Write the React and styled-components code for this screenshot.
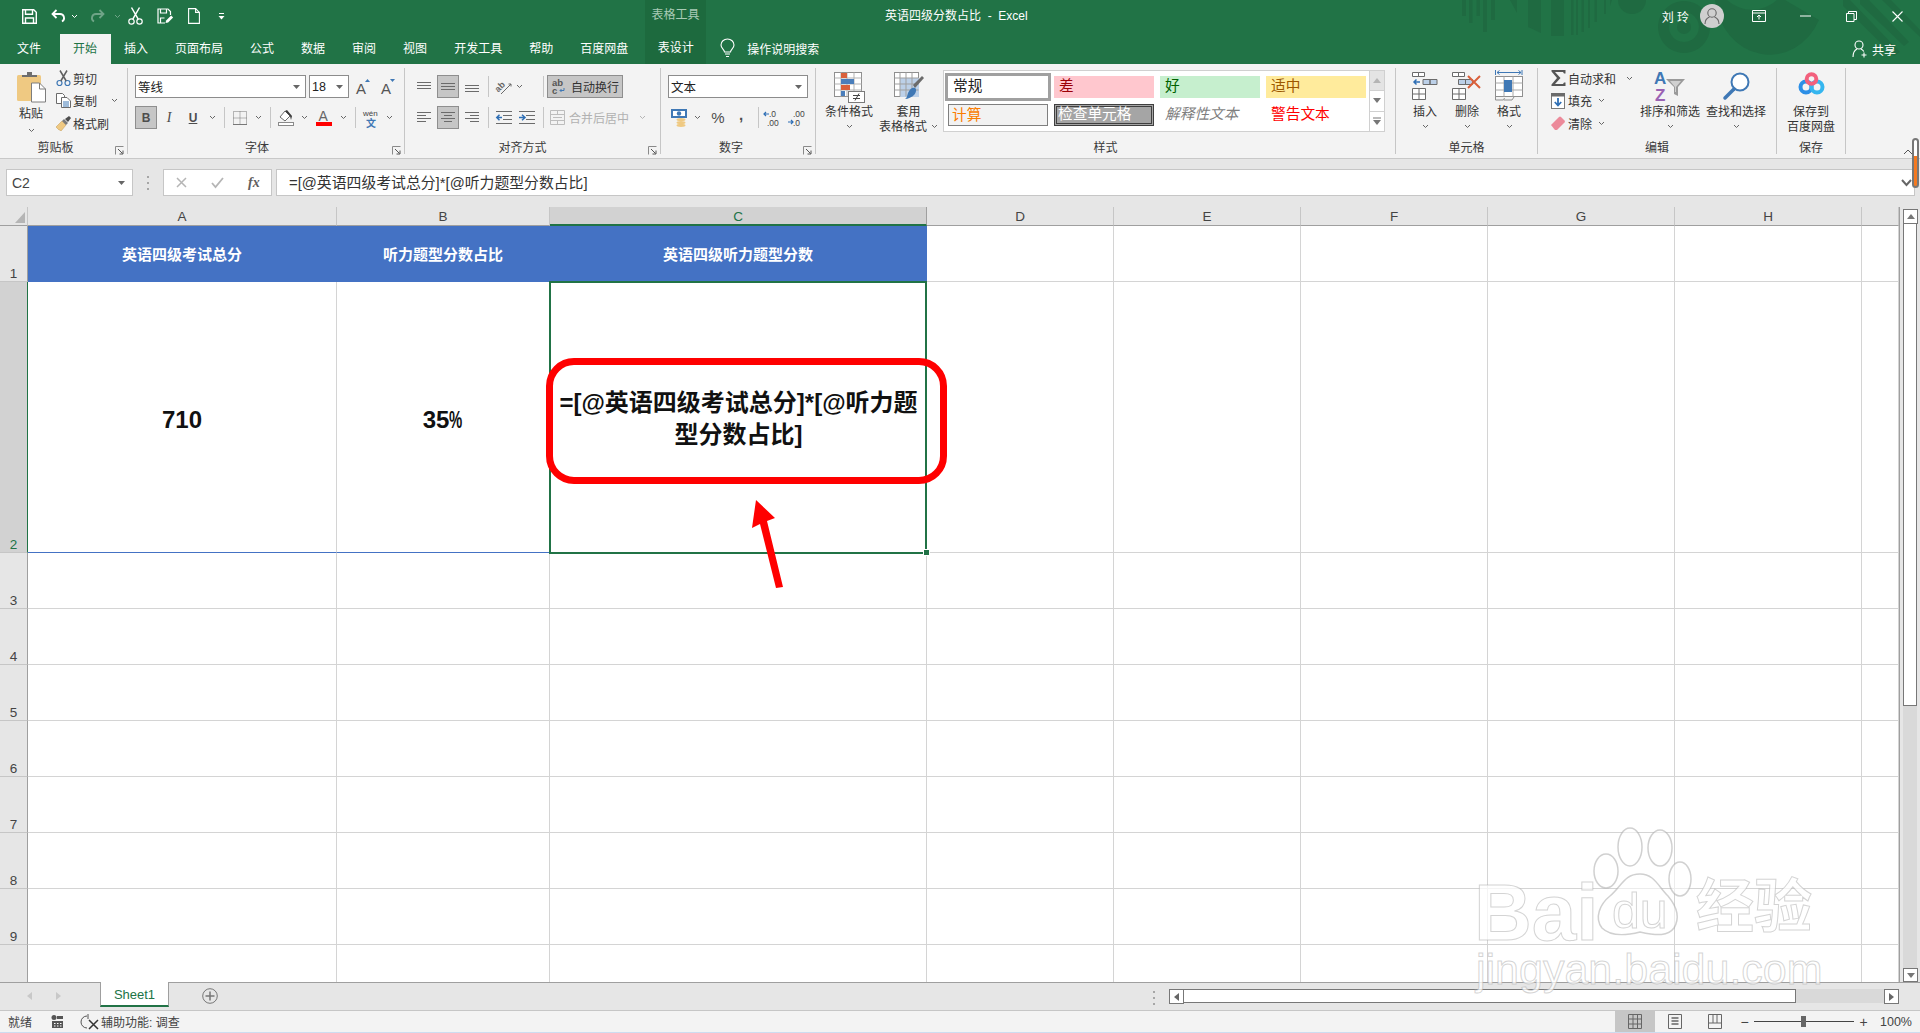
import React from "react";
import styled, { createGlobalStyle } from "styled-components";

const GlobalStyle = createGlobalStyle`
  html, body {
    margin: 0;
    padding: 0;
    overflow: hidden;
    background: #ffffff;
    font-family: "Liberation Sans", "Noto Sans CJK SC", sans-serif;
  }
  svg {
    overflow: visible;
  }
`;

const Page = styled.div`
  position: relative;
  width: 1920px;
  height: 1033px;
  overflow: hidden;
  display: flex;
  flex-direction: column;
  font-size: 12px;
  color: #333333;
`;

/* ---------- title bar ---------- */

const TitleBar = styled.div`
  position: relative;
  height: 64px;
  flex: none;
  background: #217346;
  color: #ffffff;
`;

const Decoration = styled.svg`
  position: absolute;
  left: 1440px;
  top: 0;
`;

const TopRow = styled.div`
  position: relative;
  display: flex;
  align-items: center;
  height: 32px;
`;

const Qat = styled.div`
  display: flex;
  align-items: center;
  width: 645px;
  padding-left: 22px;
  box-sizing: border-box;
`;

const QatItem = styled.span`
  display: inline-flex;
  margin-left: ${(p) => p.$ml || 0}px;
  opacity: ${(p) => (p.$dim ? 0.35 : 1)};
`;

const ContextLabel = styled.div`
  width: 61px;
  height: 32px;
  line-height: 30px;
  text-align: center;
  background: #1d6a3e;
  color: #a9cbb6;
`;

const DocTitle = styled.div`
  margin-left: 179px;
  font-size: 12px;
  white-space: pre;
  margin-top: -4px;
`;

const Account = styled.div`
  margin-left: auto;
  display: flex;
  align-items: center;
`;

const UserName = styled.span`
  font-size: 12px;
  margin-right: 11px;
`;

const Avatar = styled.span`
  display: inline-flex;
  align-items: center;
  justify-content: center;
  width: 24px;
  height: 24px;
  border-radius: 50%;
  background: #cfcfcf;
  margin-right: 12px;
`;

const WinButton = styled.span`
  display: inline-flex;
  align-items: center;
  justify-content: center;
  width: 46px;
  height: 30px;
`;

const TabRow = styled.div`
  position: relative;
  display: flex;
  align-items: flex-end;
  height: 32px;
  padding-left: 3.5px;
`;

const Tab = styled.div`
  height: 30px;
  line-height: 30px;
  padding: 0 13.5px;
  margin-left: ${(p) => p.$ml || 0}px;
  white-space: nowrap;
  background: ${(p) => (p.$active ? "#f3f3f3" : "transparent")};
  color: ${(p) => (p.$active ? "#217346" : "#ffffff")};
`;

const ContextTab = styled.div`
  width: 61px;
  height: 32px;
  line-height: 33px;
  margin-left: 3.5px;
  text-align: center;
  background: #1d6a3e;
`;

const SearchBox = styled.div`
  display: flex;
  align-items: center;
  gap: 12px;
  height: 28px;
  margin: 0 0 2px 14px;
`;

const Share = styled.div`
  display: flex;
  align-items: center;
  gap: 4px;
  height: 30px;
  margin-left: auto;
  padding-right: 24px;
`;

/* ---------- ribbon ---------- */

const Ribbon = styled.div`
  position: relative;
  display: flex;
  height: 95px;
  flex: none;
  box-sizing: border-box;
  background: #f3f3f3;
  border-bottom: 1px solid #c8c8c8;
  color: #333333;
`;

const Group = styled.div`
  position: relative;
  width: ${(p) => p.$w}px;
  flex: none;
  display: flex;
  flex-direction: column;
`;

const GroupBody = styled.div`
  height: 75px;
  padding-left: ${(p) => p.$pl || 0}px;
  display: flex;
  flex-direction: ${(p) => (p.$stack ? "column" : "row")};
`;

const GroupLabel = styled.div`
  position: relative;
  height: 18px;
  line-height: 18px;
  text-align: center;
  left: ${(p) => p.$shift || 0}px;
  color: #3a3a3a;
`;

const GroupSep = styled.div`
  width: 1px;
  flex: none;
  margin: 4px 0 4px;
  background: #c6c6c6;
`;

const Launcher = styled.svg`
  position: absolute;
  right: 3px;
  bottom: 3px;
`;

const Collapse = styled.svg`
  position: absolute;
  right: 7px;
  bottom: 3px;
`;

const ToolRow = styled.div`
  display: flex;
  align-items: center;
  height: 23px;
  margin-top: ${(p) => p.$mt || 0}px;
`;

const Tool = styled.span`
  display: inline-flex;
  align-items: center;
  justify-content: center;
  flex: none;
  width: ${(p) => p.$w}px;
  height: 23px;
  box-sizing: border-box;
  margin-left: ${(p) => p.$ml || 0}px;
  background: ${(p) => (p.$on ? "#c6c6c6" : "transparent")};
  border: ${(p) => (p.$on ? "1px solid #8e8e8e" : "none")};
  color: #4d4d4d;
`;

const ToolSep = styled.span`
  width: 1px;
  height: 21px;
  flex: none;
  background: #c6c6c6;
  margin: 0 ${(p) => p.$mr}px 0 ${(p) => p.$ml}px;
`;

const SelectBox = styled.div`
  display: flex;
  align-items: center;
  justify-content: space-between;
  width: ${(p) => p.$w}px;
  height: 23px;
  box-sizing: border-box;
  margin-left: ${(p) => p.$ml || 0}px;
  padding: 0 5px 0 2px;
  background: #ffffff;
  border: 1px solid #8c8c8c;
  color: #222222;
  font-size: 12.5px;
`;

const WrapButton = styled.div`
  display: flex;
  align-items: center;
  gap: 5px;
  width: 76px;
  height: 23px;
  box-sizing: border-box;
  padding-left: 4px;
  background: #c6c6c6;
  border: 1px solid #8e8e8e;
  white-space: nowrap;
`;

const MergeButton = styled.div`
  display: flex;
  align-items: center;
  gap: 4px;
  padding-left: 3px;
  color: #b1b1b1;
  white-space: nowrap;
`;

const PasteColumn = styled.div`
  display: flex;
  flex-direction: column;
  align-items: center;
  width: 30px;
  padding: 8px 8px 0 16px;
  flex: none;
`;

const PasteLabel = styled.span`
  white-space: nowrap;
  line-height: 20px;
  margin-top: 2px;
`;

const SmallColumn = styled.div`
  width: ${(p) => p.$w}px;
  flex: none;
  padding-top: 3px;
`;

const SmallButton = styled.div`
  display: flex;
  align-items: center;
  height: 22.5px;
  white-space: nowrap;
`;

const SmallIcon = styled.span`
  display: inline-flex;
  justify-content: center;
  width: 18px;
  flex: none;
`;

const SmallText = styled.span`
  margin-left: 1px;
`;

const CaretSlot = styled.span`
  display: inline-flex;
  margin-left: ${(p) => p.$ml || 6}px;
`;

const BigButton = styled.div`
  display: flex;
  flex-direction: column;
  align-items: center;
  width: ${(p) => p.$w}px;
  flex: none;
  line-height: 15px;
  white-space: nowrap;
`;

const BigIcon = styled.div`
  height: ${(p) => p.$h || 33}px;
  margin-top: ${(p) => p.$mt ?? 8}px;
  display: flex;
  align-items: flex-start;
`;

const BigCaret = styled.div`
  height: 13px;
  display: flex;
  align-items: center;
  justify-content: center;
`;

const InlineCaret = styled.span`
  display: inline-flex;
  margin-left: 4px;
  vertical-align: 2px;
`;

const ItalicGlyph = styled.em`
  font-family: "Liberation Serif", serif;
  font-size: 14px;
`;

const UnderGlyph = styled.u`
  font-weight: 700;
`;

const PercentGlyph = styled.span`
  font-size: 15px;
`;

const CommaGlyph = styled.strong`
  font-size: 15px;
  line-height: 1;
  margin-top: -7px;
`;

const Gallery = styled.div`
  display: flex;
  width: 442px;
  height: 62px;
  box-sizing: border-box;
  margin: 6px 0 0 5px;
  border: 1px solid #d0d0d0;
  background: #ffffff;
`;

const StyleGrid = styled.div`
  display: grid;
  grid-template-columns: repeat(4, 100px);
  grid-auto-rows: 22px;
  column-gap: 6px;
  row-gap: 6px;
  padding: 5px 0 0 4px;
  flex: 1;
`;

const StyleCell = styled.div`
  box-sizing: border-box;
  padding-left: ${(p) => p.$pl ?? 5}px;
  line-height: ${(p) => p.$lh || 21}px;
  font-size: 14.7px;
  white-space: nowrap;
  color: ${(p) => p.$fg || "#222222"};
  background: ${(p) => p.$bg || "transparent"};
  border: ${(p) => p.$border || "none"};
  box-shadow: ${(p) => p.$shadow || "none"};
  font-style: ${(p) => (p.$italic ? "italic" : "normal")};
`;

const GalleryScroll = styled.div`
  display: flex;
  flex-direction: column;
  width: 14px;
  flex: none;
  border-left: 1px solid #d0d0d0;
`;

const GalleryArrow = styled.div`
  flex: 1;
  display: flex;
  align-items: center;
  justify-content: center;
  background: ${(p) => (p.$off ? "#e4e4e4" : "#ffffff")};
  border-bottom: 1px solid #d0d0d0;
  &:last-child { border-bottom: none; }
`;

/* ---------- formula bar ---------- */

const FormulaStrip = styled.div`
  display: flex;
  flex: none;
  height: 48px;
  box-sizing: border-box;
  padding: 10px 0 0 6px;
  background: #e6e6e6;
`;

const NameBox = styled.div`
  display: flex;
  align-items: center;
  justify-content: space-between;
  width: 127px;
  height: 27px;
  box-sizing: border-box;
  padding: 0 7px 0 5px;
  background: #ffffff;
  border: 1px solid #c6c6c6;
  font-size: 14px;
  color: #444444;
`;

const Grip = styled.div`
  width: 30px;
  height: 27px;
  display: flex;
  align-items: center;
  justify-content: center;
`;

const FormulaButtons = styled.div`
  display: flex;
  align-items: center;
  width: 109px;
  height: 27px;
  box-sizing: border-box;
  padding-left: 12px;
  gap: 24px;
  background: #ffffff;
  border: 1px solid #c6c6c6;
`;

const Fx = styled.span`
  font-family: "Liberation Serif", serif;
  font-style: italic;
  font-weight: 700;
  font-size: 14px;
  color: #5f5f5f;
`;

const FormulaInput = styled.div`
  position: relative;
  width: 1639px;
  height: 27px;
  line-height: 26px;
  margin-left: 4px;
  box-sizing: border-box;
  padding-left: 12px;
  background: #ffffff;
  border: 1px solid #c6c6c6;
  font-size: 14.85px;
  color: #333333;
  white-space: nowrap;
`;

const FormulaCaret = styled.svg`
  position: absolute;
  right: 2px;
  top: 9px;
`;

const ScrollPill = styled.div`
  position: absolute;
  left: 1912px;
  top: 138px;
  width: 7px;
  height: 50px;
  box-sizing: border-box;
  border: 2px solid #777777;
  border-radius: 4px;
  background: linear-gradient(#ffffff 0 34%, #f47920 34%);
`;

/* ---------- sheet ---------- */

const SheetArea = styled.div`
  position: relative;
  display: flex;
  height: 775px;
  flex: none;
`;

const Grid = styled.div`
  display: grid;
  grid-template-columns: 28px 309px 213px 377px 187px 187px 187px 187px 187px 37px;
  grid-template-rows: 19px 56px 271px repeat(8, 56px);
  width: 1899px;
  height: 775px;
  background: #ffffff;
  overflow: hidden;
`;

const Corner = styled.div`
  display: flex;
  align-items: flex-end;
  justify-content: flex-end;
  padding: 0 2px 2px 0;
  background: #e6e6e6;
  border-right: 1px solid #c6c6c6;
  border-bottom: 1px solid #9f9f9f;
  box-sizing: border-box;
`;

const ColumnHead = styled.div`
  box-sizing: border-box;
  line-height: 19px;
  text-align: center;
  font-size: 13.5px;
  background: ${(p) => (p.$on ? "#d2d2d2" : "#e6e6e6")};
  color: ${(p) => (p.$on ? "#217346" : "#444444")};
  border-right: 1px solid ${(p) => (p.$on ? "#9f9f9f" : "#c6c6c6")};
  border-bottom: ${(p) => (p.$on ? "2px solid #217346" : "1px solid #9f9f9f")};
`;

const RowHead = styled.div`
  box-sizing: border-box;
  display: flex;
  align-items: flex-end;
  justify-content: center;
  font-size: 13.5px;
  line-height: 15px;
  background: ${(p) => (p.$on ? "#d2d2d2" : "#e6e6e6")};
  color: ${(p) => (p.$on ? "#217346" : "#444444")};
  border-right: 1px solid ${(p) => (p.$on ? "#217346" : "#9f9f9f")};
  border-bottom: 1px solid #c6c6c6;
`;

const Cell = styled.div`
  box-sizing: border-box;
  border-right: 1px solid #d4d4d4;
  border-bottom: 1px solid ${(p) => p.$edge || "#d4d4d4"};
  display: flex;
  align-items: center;
  justify-content: center;
  text-align: center;
`;

const TableHeadCell = styled(Cell)`
  background: #4472c4;
  border-color: #4472c4;
  color: #ffffff;
  font-size: 15px;
  font-weight: 700;
`;

const ValueCell = styled(Cell)`
  font-size: 24px;
  font-weight: 700;
  color: #111111;
  padding-top: 5px;
`;

const NarrowPercent = styled.span`
  display: inline-block;
  width: 14px;
  transform: scaleX(0.62);
  transform-origin: left center;
`;

const ActiveCell = styled(ValueCell)`
  position: relative;
  line-height: 32px;
  padding: 3px 6px 0;
  border: none;
  &::before {
    content: "";
    position: absolute;
    inset: -1px 0 -1px -1px;
    border: 2px solid #217346;
  }
`;

const FillHandle = styled.span`
  position: absolute;
  right: -3px;
  bottom: -3px;
  width: 5px;
  height: 5px;
  background: #217346;
  border: 1px solid #ffffff;
  z-index: 2;
`;

const CalloutRing = styled.div`
  position: absolute;
  left: 546px;
  top: 151px;
  width: 401px;
  height: 126px;
  box-sizing: border-box;
  border: 7px solid #ff0000;
  border-radius: 28px;
  pointer-events: none;
`;

const CalloutArrow = styled.svg`
  position: absolute;
  left: 745px;
  top: 290px;
`;

const VScroll = styled.div`
  width: 21px;
  flex: none;
  display: flex;
  flex-direction: column;
  box-sizing: border-box;
  padding: 2px 3px 0;
  background: #e6e6e6;
  border-left: 1px solid #9f9f9f;
`;

const ScrollArrow = styled.div`
  display: flex;
  align-items: center;
  justify-content: center;
  flex: none;
  width: ${(p) => p.$w || 15}px;
  height: ${(p) => p.$h || 15}px;
  box-sizing: border-box;
  background: #ffffff;
  border: 1px solid #777777;
`;

const VThumb = styled.div`
  height: 482px;
  flex: none;
  box-sizing: border-box;
  background: #ffffff;
  border: 1px solid #777777;
  border-top: none;
`;

const VTrack = styled.div`
  flex: 1;
  background: #d9d9d9;
`;

/* ---------- sheet tabs and status bar ---------- */

const SheetBar = styled.div`
  display: flex;
  align-items: flex-start;
  height: 29px;
  flex: none;
  box-sizing: border-box;
  background: #e6e6e6;
  border-top: 1px solid #9f9f9f;
  border-bottom: 1px solid #c6c6c6;
`;

const SheetNav = styled.div`
  display: flex;
  align-items: center;
  gap: 24px;
  width: 100px;
  height: 26px;
  padding-left: 27px;
  box-sizing: border-box;
`;

const SheetTab = styled.div`
  width: 69px;
  height: 25px;
  margin-top: -1px;
  box-sizing: border-box;
  text-align: center;
  line-height: 25px;
  font-size: 13px;
  color: #217346;
  background: #ffffff;
  border-left: 1px solid #9f9f9f;
  border-right: 1px solid #9f9f9f;
  border-bottom: 2px solid #217346;
`;

const AddSheet = styled.div`
  display: flex;
  margin: 5px 0 0 33px;
`;

const SplitDots = styled.div`
  margin: 8px 0 0 auto;
  display: flex;
`;

const HScroll = styled.div`
  display: flex;
  width: 730px;
  height: 14px;
  margin: 6px 21px 0 14px;
  background: #d9d9d9;
`;

const HThumb = styled.div`
  width: 612px;
  box-sizing: border-box;
  background: #ffffff;
  border: 1px solid #777777;
  border-left: none;
`;

const HGap = styled.div`
  flex: 1;
`;

const StatusBar = styled.div`
  display: flex;
  align-items: center;
  flex: 1;
  box-sizing: border-box;
  background: #f3f3f3;
  border-bottom: 1px solid #cddcf0;
  font-size: 12px;
  color: #444444;
`;

const StatusText = styled.span`
  margin-left: ${(p) => p.$ml}px;
  white-space: nowrap;
`;

const StatusIcon = styled.span`
  display: inline-flex;
  margin-left: ${(p) => p.$ml}px;
`;

const ViewButton = styled.div`
  display: flex;
  align-items: center;
  justify-content: center;
  width: 40px;
  height: 100%;
  background: ${(p) => (p.$on ? "#c6c6c6" : "transparent")};
`;

const ViewGroup = styled.div`
  display: flex;
  height: 100%;
  margin-left: auto;
`;

const ZoomSign = styled.span`
  font-size: 14px;
  width: 19px;
  text-align: center;
  color: #444444;
`;

const ZoomTrack = styled.div`
  position: relative;
  width: 100px;
  height: 1px;
  background: #444444;
`;

const ZoomThumb = styled.span`
  position: absolute;
  left: 47px;
  top: -5px;
  width: 5px;
  height: 11px;
  background: #666666;
`;

const ZoomValue = styled.span`
  width: 47px;
  padding-right: 8px;
  box-sizing: border-box;
  text-align: right;
  font-size: 12.5px;
`;

/* ---------- watermark ---------- */

const Watermark = styled.div`
  position: absolute;
  left: 1470px;
  top: 824px;
  width: 360px;
  height: 175px;
  pointer-events: none;
`;

const WatermarkText = styled.span`
  position: absolute;
  left: ${(p) => p.$x}px;
  top: ${(p) => p.$y}px;
  font-size: ${(p) => p.$size}px;
  font-weight: ${(p) => p.$weight || 700};
  line-height: 0.9;
  white-space: nowrap;
  color: rgba(255, 255, 255, 0.75);
  -webkit-text-stroke: 1px rgba(170, 170, 170, 0.5);
`;

const WatermarkPaw = styled.svg`
  position: absolute;
  left: 120px;
  top: 0;
`;

/* ---------- icons ---------- */

const Caret = ({ color = "#666666" }) => (
  <svg width="7" height="5" viewBox="0 0 7 5">
    <path d="M1 1l2.500 2.500L6 1" fill="none" stroke={color} strokeWidth="1" />
  </svg>
);

const DropArrow = () => (
  <svg width="7" height="4" viewBox="0 0 7 4">
    <path d="M0 0h7L3.500 4z" fill="#666666" />
  </svg>
);

const LauncherIcon = () => (
  <Launcher width="9" height="9" viewBox="0 0 9 9">
    <path d="M.5 8.500v-8h8" fill="none" stroke="#8a8a8a" />
    <path d="M3 3l4.500 4.500M8 4.500v3.500H4.500" fill="none" stroke="#555555" />
  </Launcher>
);

const SaveIcon = () => (
  <svg width="15" height="15" viewBox="0 0 15 15" fill="none" stroke="#fff" strokeWidth="1.400">
    <path d="M.7.7h11l2.600 2.600v11H.7z" />
    <path d="M3.500.7v4.600h7V.7M3.500 14.300V9h8v5.300" />
  </svg>
);

const UndoIcon = ({ flip }) => (
  <svg width="15" height="14" viewBox="0 0 15 14" fill="none" stroke="#fff" strokeWidth="1.800">
    <g transform={flip ? "matrix(-1 0 0 1 15 0)" : undefined}>
      <path d="M5.500 1L1.500 5l4 4" />
      <path d="M2 5h7a4 4 0 0 1 2 7.500" />
    </g>
  </svg>
);

const QatCut = () => (
  <svg width="15" height="18" viewBox="0 0 15 18" fill="none" stroke="#fff" strokeWidth="1.200">
    <circle cx="3.500" cy="14.500" r="2.700" />
    <circle cx="11.500" cy="14.500" r="2.700" />
    <path d="M4.800 12.200L11.500.5M10.200 12.200L3.500.5" strokeWidth="1.500" />
  </svg>
);

const QatSaveAs = () => (
  <svg width="16" height="16" viewBox="0 0 16 16" fill="none" stroke="#fff" strokeWidth="1.200">
    <path d="M8 15H1V1h10l2.500 2.500V7" />
    <path d="M3.500 1v4h6V1M3.500 15v-5h4" />
    <path d="M8.500 15l.6-2.600 5-5 2 2-5 5z" fill="#fff" stroke="none" />
  </svg>
);

const QatNew = () => (
  <svg width="12" height="16" viewBox="0 0 12 16" fill="none" stroke="#fff" strokeWidth="1.100">
    <path d="M.6.6h7l3.800 3.800v11H.6z" />
    <path d="M7.600.6v3.800h3.800" />
  </svg>
);

const QatMore = () => (
  <svg width="7" height="8" viewBox="0 0 7 8">
    <path d="M1 1h5v1H1z" fill="#fff" />
    <path d="M.5 4h6L3.500 7.500z" fill="#fff" />
  </svg>
);

const Decor = () => (
  <Decoration width="480" height="64" viewBox="0 0 480 64" fill="#1f6a41">
    <path d="M22 0h4v16h-4zM29 0h3.500v23H29zM36.500 0H40v16h-3.500zM43 0h4v32h-4zM51 0h4v20h-4z" />
    <path d="M70 0h7v13zM88 0h13v33l-13-6zM111 0h13v36h-13z" />
    <path d="M131 0h2.500v35H131zM136 0h2v35h-2zM141.500 0h2.500v32h-2.500zM148 0h2v28h-2zM154.500 0h2.500v22h-2.500zM164 0h2v14h-2zM172 0h-2v6z" />
    <circle cx="192" cy="0" r="14" />
    <path d="M244 1a26 26 0 1 0 .1 0zM244 12a15 15 0 1 1-.1 0z" fillRule="evenodd" />
    <circle cx="244" cy="27" r="7" />
    <path d="M275 0a55 62 0 0 0 104 20L345 0h-8a40 45 0 0 1-50 0z" />
    <path d="M403 0h7l50 52-6 4-51-50zM420 0h9l40 42-5 4-44-42zM442 0h9l29 30v7z" />
  </Decoration>
);

const Bulb = () => (
  <svg width="15" height="19" viewBox="0 0 15 19" fill="none" stroke="#fff" strokeWidth="1.100">
    <path d="M4.500 13c0-2.500-3.500-3.500-3.500-7a6.500 6 0 0 1 13 0c0 3.500-3.500 4.500-3.500 7z" />
    <path d="M5 15h5M6 17.500h3" />
  </svg>
);

const PersonPlus = () => (
  <svg width="16" height="18" viewBox="0 0 16 18" fill="none" stroke="#fff" strokeWidth="1.100">
    <circle cx="7" cy="5" r="4" />
    <path d="M1 17c0-4.500 2-7 4-8M9 9c1 .5 2 1 2.800 2.500M12 12.500v5M9.500 15h5" />
  </svg>
);

const PersonIcon = () => (
  <svg width="16" height="18" viewBox="0 0 16 18" fill="none" stroke="#666666" strokeWidth="1.100">
    <circle cx="8" cy="6" r="4.200" />
    <path d="M1 17c0-4 2-6 4.500-7M15 17c0-4-2-6-4.500-7" />
  </svg>
);

const RibbonDisplay = () => (
  <svg width="14" height="12" viewBox="0 0 14 12" fill="none" stroke="#fff">
    <path d="M.5.5h13v11H.5zM.5 3h13" />
    <path d="M7 9.500v-4M5 7l2-2 2 2" />
  </svg>
);

const MinIcon = () => (
  <svg width="11" height="2" viewBox="0 0 11 2"><path d="M0 1h11" stroke="#fff" /></svg>
);

const RestoreIcon = () => (
  <svg width="11" height="11" viewBox="0 0 11 11" fill="none" stroke="#fff">
    <path d="M.5 2.500h7.500v8H.5zM2.500 2.500v-2h8v8H8" />
  </svg>
);

const CloseIcon = () => (
  <svg width="11" height="11" viewBox="0 0 11 11" stroke="#fff" strokeWidth="1.100">
    <path d="M.5.5l10 10M10.500.5l-10 10" />
  </svg>
);

const PasteIcon = () => (
  <svg width="29" height="30" viewBox="0 0 29 30">
    <rect x="0" y="3" width="24" height="26" rx="1.500" fill="#efc982" />
    <path d="M5 5V3h5V0h5v3h5v2z" fill="#6e6e6e" />
    <path d="M14.500 11h8l6 6v13h-14z" fill="#fff" stroke="#7d7d7d" />
    <path d="M22.500 11v6h6" fill="none" stroke="#7d7d7d" />
  </svg>
);

const CutIcon = () => (
  <svg width="15" height="17" viewBox="0 0 15 17" fill="none">
    <circle cx="3.500" cy="13" r="2.500" stroke="#3f78b5" strokeWidth="1.200" />
    <circle cx="11.500" cy="13" r="2.500" stroke="#3f78b5" strokeWidth="1.200" />
    <path d="M4.800 11L11 .5M10.200 11L4 .5" stroke="#5f5f5f" strokeWidth="1.500" />
  </svg>
);

const CopyIcon = () => (
  <svg width="15" height="15" viewBox="0 0 15 15" fill="#fff" stroke="#6b6b6b">
    <path d="M.5.5h6l2 2v8H.5z" />
    <path d="M5.500 4.500h5.500l3.500 3.500v6.500h-9z" />
    <path d="M7 9h6M7 11h6M7 13h6" stroke="#3f78b5" />
  </svg>
);

const BrushIcon = () => (
  <svg width="15" height="15" viewBox="0 0 15 15">
    <path d="M0 11l6-6 4 4-5 6-1-1-1 0-1-1z" fill="#efc982" stroke="#c9a35f" strokeWidth=".6" />
    <path d="M6 5l2-2 4 4-2 2z" fill="#7a7a7a" />
    <path d="M9 3l4-3 2 2-3 4z" fill="#4d4d4d" />
  </svg>
);

const GrowFont = ({ down }) => (
  <svg width="14" height="16" viewBox="0 0 14 16">
    <text x="0" y="15" fontSize="15" fontFamily="Liberation Sans" fill="#555555">A</text>
    <path d={down ? "M9 0h5l-2.500 3z" : "M9 3h5L11.500 0z"} fill="#3f78b5" />
  </svg>
);

const BorderIcon = () => (
  <svg width="14" height="14" viewBox="0 0 14 14" fill="none" stroke="#777777" strokeDasharray="1 1">
    <path d="M.5.5h13v13H.5zM7 .5v13M.5 7h13" />
    <path d="M0 13.500h14" strokeDasharray="none" />
  </svg>
);

const FillIcon = () => (
  <svg width="16" height="17" viewBox="0 0 16 17">
    <path d="M2 8l5-6 5 5-5 5z" fill="#fff" stroke="#6b6b6b" />
    <path d="M7 2l5 5 1 4 1-4-5-6z" fill="#3a3a3a" />
    <rect x=".5" y="13.500" width="15" height="3" fill="#fff" stroke="#8a8a8a" />
  </svg>
);

const FontColorIcon = () => (
  <svg width="16" height="17" viewBox="0 0 16 17">
    <text x="2.500" y="12" fontSize="14" fontFamily="Liberation Sans" fill="#666666">A</text>
    <rect y="13" width="16" height="4" fill="#ff0000" />
  </svg>
);

const PinyinIcon = () => (
  <svg width="16" height="18" viewBox="0 0 16 18">
    <text x="0" y="7" fontSize="8" fontFamily="Liberation Sans" fill="#444444">wén</text>
    <text x="3" y="17.500" fontSize="10" fontFamily="Noto Sans CJK SC" fontWeight="700" fill="#3f78b5">文</text>
  </svg>
);

const Lines = ({ rows, w = 14, h = 13, color = "#6b6b6b" }) => (
  <svg width={w} height={h} viewBox={`0 0 ${w} ${h}`} fill="none" stroke={color}>
    {rows.map(([x1, x2, y]) => (
      <path key={`${x1}-${y}`} d={`M${x1} ${y}.5H${x2}`} />
    ))}
  </svg>
);

const OrientIcon = () => (
  <svg width="17" height="17" viewBox="0 0 17 17">
    <text x="0" y="11" fontSize="9" fontFamily="Liberation Sans" fontWeight="700" fill="#666666" transform="rotate(-45 6 9)">ab</text>
    <path d="M6 16L16 6M13.500 6H16v2.500" fill="none" stroke="#6b6b6b" />
  </svg>
);

const IndentIcon = ({ reverse }) => (
  <svg width="16" height="13" viewBox="0 0 16 13" fill="none" stroke="#6b6b6b">
    <path d="M0 .5h16M7 4.500h9M7 8.500h9M0 12.500h16" />
    <path d={reverse ? "M0 6.500h5M3 3.800l3 2.700-3 2.700" : "M1 6.500h5M3.500 3.800L.8 6.500l2.700 2.700"} stroke="#2f6fb5" strokeWidth="1.500" />
  </svg>
);

const WrapIcon = () => (
  <svg width="14" height="17" viewBox="0 0 14 17">
    <text x="0" y="8" fontSize="9.500" fontFamily="Liberation Sans" fontWeight="700" fill="#555555">ab</text>
    <text x="0" y="16" fontSize="9.500" fontFamily="Liberation Sans" fontWeight="700" fill="#555555">c</text>
    <path d="M12 10v2.500H8M9.500 11L8 12.500 9.500 14" fill="none" stroke="#3f78b5" />
  </svg>
);

const MergeIcon = () => (
  <svg width="15" height="15" viewBox="0 0 15 15" fill="none" stroke="#bdbdbd">
    <path d="M.5.5h14v14H.5zM.5 4.500h14M.5 10.500h14M7.500.5v4M7.500 10.500v4M3 7.500h9" />
  </svg>
);

const AccountingIcon = () => (
  <svg width="17" height="18" viewBox="0 0 17 18">
    <rect x="0" y="0" width="16" height="9" fill="#3f78b5" />
    <rect x="2" y="2" width="12" height="5" fill="#fff" />
    <circle cx="8" cy="4.500" r="2.200" fill="#3f78b5" />
    <ellipse cx="10" cy="10.500" rx="4.500" ry="1.600" fill="#efc982" />
    <ellipse cx="10" cy="13.500" rx="4.500" ry="1.600" fill="#efc982" />
    <ellipse cx="10" cy="16.300" rx="4.500" ry="1.600" fill="#efc982" />
  </svg>
);

const DecimalIcon = ({ more }) => (
  <svg width="16" height="16" viewBox="0 0 16 16" fontFamily="Liberation Sans" fontSize="8.500" fill="#444444">
    <text x="5" y="7">{more ? ".00" : ".0"}</text>
    <text x={more ? 5 : 3} y="15.500">{more ? ".0" : ".00"}</text>
    {more ? (
      <path d="M0 12h5M3 10l2 2-2 2" stroke="#2f6fb5" fill="none" strokeWidth="1.200" />
    ) : (
      <path d="M0 4h5M2 2L0 4l2 2" stroke="#2f6fb5" fill="none" strokeWidth="1.200" />
    )}
  </svg>
);

const CondFormatIcon = () => (
  <svg width="31" height="31" viewBox="0 0 31 31">
    <rect x=".5" y=".5" width="27" height="24" fill="#fff" stroke="#8f8f8f" />
    <path d="M7 .5v24M13 .5v24M20 .5v24M.5 6h27M.5 12h27M.5 18h27" stroke="#b3b3b3" />
    <rect x="7" y="1" width="6" height="5" fill="#d9603b" />
    <rect x="7" y="7" width="13" height="5" fill="#4a7ebb" />
    <rect x="7" y="13" width="9" height="5" fill="#d9603b" />
    <rect x="7" y="19" width="4" height="5" fill="#4a7ebb" />
    <rect x="14.500" y="19.500" width="16" height="11" fill="#fff" stroke="#7a7a7a" />
    <path d="M19 23.500h7M19 26.500h7M25 21.500l-4 7" stroke="#444444" fill="none" />
  </svg>
);

const TableFormatIcon = () => (
  <svg width="30" height="30" viewBox="0 0 30 30">
    <rect x=".5" y=".5" width="24" height="24" fill="#fff" stroke="#8f8f8f" />
    <rect x="6" y="6" width="19" height="19" fill="#bcd0e8" />
    <path d="M6 .5v24M12 .5v24M18 .5v24M.5 6h24M.5 12h24M.5 18h24" stroke="#9f9f9f" />
    <path d="M19 13L28 4l2 2-9 10z" fill="#6b6b6b" />
    <path d="M14 21c2-5 5-6 7-5s1 5-1 7-6 4-9 4c2-1 2-3 3-6z" fill="#3f78b5" />
  </svg>
);

const InsertIcon = () => (
  <svg width="26" height="28" viewBox="0 0 26 28">
    <path d="M.5.5h6v4h-6zM6.500.5h6v4h-6z" fill="#fff" stroke="#6b6b6b" />
    <path d="M11 7.500h7v5h-7zM18 7.500h7v5h-7z" fill="#bcd0e8" stroke="#6b6b6b" />
    <path d="M2 10h6M4.500 7.500L2 10l2.500 2.500" fill="none" stroke="#2f6fb5" strokeWidth="1.500" />
    <path d="M.5 16.500h13v11H.5zM.5 22h13M7 16.500v11" fill="#fff" stroke="#6b6b6b" />
  </svg>
);

const DeleteIcon = () => (
  <svg width="30" height="28" viewBox="0 0 30 28">
    <path d="M.5.5h6v4h-6zM6.500.5h6v4h-6z" fill="#fff" stroke="#6b6b6b" />
    <path d="M6.500 7.500h7v5h-7zM13.500 7.500h7v5h-7z" fill="#bcd0e8" stroke="#6b6b6b" />
    <path d="M.5 16.500h13v11H.5zM.5 22h13M7 16.500v11" fill="#fff" stroke="#6b6b6b" />
    <path d="M16 4l12 12M28 4L16 16" stroke="#d9603b" strokeWidth="2" />
  </svg>
);

const FormatIcon = () => (
  <svg width="28" height="32" viewBox="0 0 28 32">
    <path d="M.5 0v5M27 0v5M2 2.500h24M4.500.5L2 2.500l2.500 2M23.500.5L26 2.500l-2.500 2" fill="none" stroke="#3f78b5" />
    <rect x=".5" y="6.500" width="27" height="20" fill="#fff" stroke="#8f8f8f" />
    <path d="M9 6.500v20M18 6.500v20M.5 13h27M.5 20h27" stroke="#a8a8a8" />
    <rect x="9" y="10" width="8" height="12" fill="#3f78b5" />
    <path d="M.5 27v3h8l1-2M9 30h8l2-3" fill="none" stroke="#8f8f8f" />
  </svg>
);

const SigmaIcon = () => (
  <svg width="15" height="16" viewBox="0 0 15 16">
    <path d="M.5 0h14v3.500h-1.500L12 2H4l5.500 6L4 14h8l1-1.500h1.500V16H.5v-1.500L6 8 .5 1.500z" fill="#555555" />
  </svg>
);

const FillDownIcon = () => (
  <svg width="14" height="16" viewBox="0 0 14 16">
    <rect x=".5" y=".5" width="13" height="15" fill="#fff" stroke="#7a7a7a" />
    <rect x="0" y="0" width="14" height="3.500" fill="#6b6b6b" />
    <path d="M7 5v7M3.800 9L7 12.500 10.200 9" fill="none" stroke="#2f6fb5" strokeWidth="1.800" />
  </svg>
);

const EraserIcon = () => (
  <svg width="14" height="14" viewBox="0 0 14 14">
    <path d="M0 9l8-8a1.500 1.500 0 0 1 2 0l3.500 3.500a1.500 1.500 0 0 1 0 2L6 14H4z" fill="#ec8a9a" />
  </svg>
);

const SortIcon = () => (
  <svg width="32" height="33" viewBox="0 0 32 33" fontFamily="Liberation Sans" fontWeight="700" fontSize="17">
    <text x="0" y="14" fill="#3f78b5">A</text>
    <text x="1" y="31" fill="#9a62b3">Z</text>
    <path d="M12 9h19l-7 8v9l-4-2v-7z" fill="#9a9a9a" />
    <path d="M16 11h11l-5 6v5l-1 0v-5z" fill="#d0d0d0" />
  </svg>
);

const FindIcon = () => (
  <svg width="27" height="28" viewBox="0 0 27 28" fill="none">
    <circle cx="17" cy="10" r="8.500" stroke="#3f78b5" strokeWidth="2" fill="#fff" />
    <path d="M11 17L2 26" stroke="#3f78b5" strokeWidth="3.500" strokeLinecap="round" />
  </svg>
);

const BaiduDiskIcon = () => (
  <svg width="27" height="23" viewBox="0 0 27 23" fill="none">
    <circle cx="8" cy="15" r="5.500" stroke="#2c8fe6" strokeWidth="4" />
    <circle cx="19" cy="15" r="5.500" stroke="#35b6ef" strokeWidth="4" />
    <circle cx="13.500" cy="7" r="4.800" stroke="#f2607c" strokeWidth="4" />
  </svg>
);

const MiniArrow = ({ dir = "up", color = "#777777" }) => {
  const shapes = {
    up: "M0 5L4 0l4 5z",
    down: "M0 0h8L4 5z",
    left: "M5 0v8L0 4z",
    right: "M0 0v8l5-4z",
  };
  const box = dir === "up" || dir === "down" ? [8, 5] : [5, 8];
  return (
    <svg width={box[0]} height={box[1]} viewBox={`0 0 ${box[0]} ${box[1]}`}>
      <path d={shapes[dir]} fill={color} />
    </svg>
  );
};

const MoreArrow = () => (
  <svg width="8" height="9" viewBox="0 0 8 9">
    <path d="M0 1h8" stroke="#777777" />
    <path d="M0 3h8L4 8z" fill="#777777" />
  </svg>
);

const CancelMark = () => (
  <svg width="11" height="11" viewBox="0 0 11 11" stroke="#b5b5b5" strokeWidth="1.500">
    <path d="M1 1l9 9M10 1l-9 9" />
  </svg>
);

const EnterMark = () => (
  <svg width="13" height="11" viewBox="0 0 13 11" fill="none" stroke="#b5b5b5" strokeWidth="1.800">
    <path d="M1 6l3.500 4L12 1" />
  </svg>
);

const GripDots = ({ color = "#a6a6a6" }) => (
  <svg width="2" height="14" viewBox="0 0 2 14" fill={color}>
    <rect y="0" width="2" height="2" />
    <rect y="6" width="2" height="2" />
    <rect y="12" width="2" height="2" />
  </svg>
);

const PlusCircle = () => (
  <svg width="16" height="16" viewBox="0 0 16 16" fill="none" stroke="#777777">
    <circle cx="8" cy="8" r="7.300" />
    <path d="M8 3.500v9M3.500 8h9" strokeWidth="1.500" />
  </svg>
);

const MacroIcon = () => (
  <svg width="13" height="13" viewBox="0 0 13 13" fill="#555555">
    <circle cx="3" cy="2.500" r="2.500" />
    <path d="M6 1h6v3H6zM1 6h11v7H1z" />
    <path d="M3 8h1.500v1H3zM6 8h1.500v1H6zM9 8h1.500v1H9zM3 10.500h1.500v1H3zM6 10.500h1.500v1H6zM9 10.500h1.500v1H9z" fill="#fff" />
  </svg>
);

const AccessIcon = () => (
  <svg width="17" height="16" viewBox="0 0 17 16" fill="none" stroke="#555555">
    <path d="M5 2a6 6 0 0 0 0 12" />
    <path d="M6 0v5" />
    <path d="M7 6l9 9M16 6l-9 9" stroke="#333333" strokeWidth="1.500" />
  </svg>
);

const NormalView = () => (
  <svg width="14" height="15" viewBox="0 0 14 15" fill="none" stroke="#666666">
    <path d="M.5.500h13v14H.5zM5 .5v14M9.500.5v14M.5 5h13M.5 10h13" />
  </svg>
);

const PageView = () => (
  <svg width="14" height="15" viewBox="0 0 14 15" fill="none" stroke="#666666">
    <path d="M.5.500h13v14H.5z" />
    <path d="M3.500 4h7M3.500 7h7M3.500 10h7" strokeWidth="1.300" />
  </svg>
);

const BreakView = () => (
  <svg width="14" height="15" viewBox="0 0 14 15" fill="none" stroke="#666666">
    <path d="M.5.500h13v14H.5zM.5 9h13M5 .5v8.500M9 .5v8.500" />
  </svg>
);

const PawIcon = () => (
  <WatermarkPaw width="100" height="115" viewBox="0 0 100 115" fill="rgba(255,255,255,.55)" stroke="rgba(170,170,170,.55)" strokeWidth="1.500">
    <ellipse cx="40" cy="23" rx="12" ry="19" />
    <ellipse cx="70" cy="24" rx="12" ry="18" />
    <ellipse cx="16" cy="47" rx="12" ry="17" />
    <ellipse cx="90" cy="55" rx="11" ry="17" />
    <path d="M50 50c14 0 18 12 28 22 10 12 12 22 6 32-6 8-16 8-34 4-16 4-30 4-38-4-8-10-2-24 8-32 12-10 14-22 30-22z" />
  </WatermarkPaw>
);

/* ---------- data ---------- */

const leftTabs = ["插入", "页面布局", "公式", "数据", "审阅", "视图", "开发工具", "帮助", "百度网盘"];
const columns = ["A", "B", "C", "D", "E", "F", "G", "H", ""];
// row 10 is only partly on screen, its number sits below the fold
const blankRows = [3, 4, 5, 6, 7, 8, 9, ""];

const styleCells = [
  { key: "常规", $fg: "#222222", $bg: "#ffffff", $shadow: "0 0 0 3px #a0a0a0", $pl: 5 },
  { key: "差", $fg: "#9c0006", $bg: "#ffc7ce" },
  { key: "好", $fg: "#006100", $bg: "#c6efce" },
  { key: "适中", $fg: "#9c5700", $bg: "#ffeb9c" },
  { key: "计算", $fg: "#fa7d00", $bg: "#f2f2f2", $border: "1px solid #7f7f7f", $pl: 3, $lh: 20 },
  { key: "检查单元格", $fg: "#ffffff", $bg: "#a5a5a5", $border: "3px double #3f3f3f", $pl: 1, $lh: 15 },
  { key: "解释性文本", $fg: "#7f7f7f", $italic: true },
  { key: "警告文本", $fg: "#ff0000" },
];

const alignTop = [[0, 14, 2], [0, 14, 5], [0, 14, 8]];
const alignMid = [[0, 14, 3], [0, 14, 6], [0, 14, 9]];
const alignBottom = [[0, 14, 5], [0, 14, 8], [0, 14, 11]];
const alignLeft = [[0, 14, 1], [0, 9, 4], [0, 14, 7], [0, 9, 10]];
const alignCenter = [[0, 14, 1], [3, 11, 4], [0, 14, 7], [3, 11, 10]];
const alignRight = [[0, 14, 1], [5, 14, 4], [0, 14, 7], [5, 14, 10]];

export default function App() {
  return (
    <Page>
      <GlobalStyle />

      <TitleBar>
        <Decor />
        <TopRow>
          <Qat>
            <QatItem><SaveIcon /></QatItem>
            <QatItem $ml={14}><UndoIcon /></QatItem>
            <QatItem $ml={5}><Caret color="#ffffff" /></QatItem>
            <QatItem $ml={12} $dim><UndoIcon flip /></QatItem>
            <QatItem $ml={9} $dim><Caret color="#ffffff" /></QatItem>
            <QatItem $ml={7}><QatCut /></QatItem>
            <QatItem $ml={14}><QatSaveAs /></QatItem>
            <QatItem $ml={15}><QatNew /></QatItem>
            <QatItem $ml={18}><QatMore /></QatItem>
          </Qat>
          <ContextLabel>表格工具</ContextLabel>
          <DocTitle>英语四级分数占比  -  Excel</DocTitle>
          <Account>
            <UserName>刘 玲</UserName>
            <Avatar><PersonIcon /></Avatar>
            <WinButton><RibbonDisplay /></WinButton>
            <WinButton><MinIcon /></WinButton>
            <WinButton><RestoreIcon /></WinButton>
            <WinButton><CloseIcon /></WinButton>
          </Account>
        </TopRow>
        <TabRow>
          <Tab>文件</Tab>
          <Tab $active $ml={5}>开始</Tab>
          {leftTabs.map((t) => (
            <Tab key={t}>{t}</Tab>
          ))}
          <ContextTab>表设计</ContextTab>
          <SearchBox>
            <Bulb />
            <span>操作说明搜索</span>
          </SearchBox>
          <Share>
            <PersonPlus />
            <span>共享</span>
          </Share>
        </TabRow>
      </TitleBar>

      <Ribbon>
        <Group $w={127}>
          <GroupBody>
            <PasteColumn>
              <PasteIcon />
              <PasteLabel>粘贴</PasteLabel>
              <BigCaret><Caret /></BigCaret>
            </PasteColumn>
            <SmallColumn $w={73}>
              <SmallButton><SmallIcon><CutIcon /></SmallIcon><SmallText>剪切</SmallText></SmallButton>
              <SmallButton><SmallIcon><CopyIcon /></SmallIcon><SmallText>复制</SmallText><CaretSlot $ml={14}><Caret /></CaretSlot></SmallButton>
              <SmallButton><SmallIcon><BrushIcon /></SmallIcon><SmallText>格式刷</SmallText></SmallButton>
            </SmallColumn>
          </GroupBody>
          <GroupLabel $shift={-8}>剪贴板</GroupLabel>
          <LauncherIcon />
        </Group>
        <GroupSep />

        <Group $w={276}>
          <GroupBody $stack $pl={7}>
            <ToolRow $mt={11}>
              <SelectBox $w={171}>等线<DropArrow /></SelectBox>
              <SelectBox $w={40} $ml={3}>18<DropArrow /></SelectBox>
              <Tool $w={27}><GrowFont /></Tool>
              <Tool $w={24}><GrowFont down /></Tool>
            </ToolRow>
            <ToolRow $mt={8}>
              <Tool $w={22} $on><strong>B</strong></Tool>
              <Tool $w={24}><ItalicGlyph>I</ItalicGlyph></Tool>
              <Tool $w={24}><UnderGlyph>U</UnderGlyph></Tool>
              <Tool $w={14}><Caret /></Tool>
              <ToolSep $ml={5} $mr={4} />
              <Tool $w={22}><BorderIcon /></Tool>
              <Tool $w={14}><Caret /></Tool>
              <ToolSep $ml={5} $mr={4} />
              <Tool $w={22}><FillIcon /></Tool>
              <Tool $w={14}><Caret /></Tool>
              <Tool $w={26}><FontColorIcon /></Tool>
              <Tool $w={12}><Caret /></Tool>
              <ToolSep $ml={6} $mr={5} />
              <Tool $w={20}><PinyinIcon /></Tool>
              <Tool $w={16}><Caret /></Tool>
            </ToolRow>
          </GroupBody>
          <GroupLabel $shift={-9}>字体</GroupLabel>
          <LauncherIcon />
        </Group>
        <GroupSep />

        <Group $w={255}>
          <GroupBody $stack $pl={9}>
            <ToolRow $mt={11}>
              <Tool $w={20}><Lines rows={alignTop} /></Tool>
              <Tool $w={22} $ml={3} $on><Lines rows={alignMid} /></Tool>
              <Tool $w={20} $ml={3}><Lines rows={alignBottom} /></Tool>
              <ToolSep $ml={6} $mr={5} />
              <Tool $w={19}><OrientIcon /></Tool>
              <Tool $w={12}><Caret /></Tool>
              <ToolSep $ml={18} $mr={3} />
              <WrapButton><WrapIcon /><span>自动换行</span></WrapButton>
            </ToolRow>
            <ToolRow $mt={8}>
              <Tool $w={20}><Lines rows={alignLeft} /></Tool>
              <Tool $w={22} $ml={3} $on><Lines rows={alignCenter} /></Tool>
              <Tool $w={20} $ml={3}><Lines rows={alignRight} /></Tool>
              <ToolSep $ml={6} $mr={5} />
              <Tool $w={19}><IndentIcon /></Tool>
              <Tool $w={28}><IndentIcon reverse /></Tool>
              <ToolSep $ml={2} $mr={3} />
              <MergeButton><MergeIcon /><span>合并后居中</span><CaretSlot $ml={6}><Caret color="#b5b5b5" /></CaretSlot></MergeButton>
            </ToolRow>
          </GroupBody>
          <GroupLabel $shift={-10}>对齐方式</GroupLabel>
          <LauncherIcon />
        </Group>
        <GroupSep />

        <Group $w={154}>
          <GroupBody $stack $pl={7}>
            <ToolRow $mt={11}>
              <SelectBox $w={140}>文本<DropArrow /></SelectBox>
            </ToolRow>
            <ToolRow $mt={8}>
              <Tool $w={23}><AccountingIcon /></Tool>
              <Tool $w={12}><Caret /></Tool>
              <Tool $w={30}><PercentGlyph>%</PercentGlyph></Tool>
              <Tool $w={16}><CommaGlyph>,</CommaGlyph></Tool>
              <ToolSep $ml={9} $mr={0} />
              <Tool $w={26}><DecimalIcon /></Tool>
              <Tool $w={22}><DecimalIcon more /></Tool>
            </ToolRow>
          </GroupBody>
          <GroupLabel $shift={-7}>数字</GroupLabel>
          <LauncherIcon />
        </Group>
        <GroupSep />

        <Group $w={579}>
          <GroupBody $pl={3}>
            <BigButton $w={60}>
              <BigIcon><CondFormatIcon /></BigIcon>
              <span>条件格式</span>
              <BigCaret><Caret /></BigCaret>
            </BigButton>
            <BigButton $w={59}>
              <BigIcon><TableFormatIcon /></BigIcon>
              <span>套用</span>
              <span>表格格式<InlineCaret><Caret /></InlineCaret></span>
            </BigButton>
            <Gallery>
              <StyleGrid>
                {styleCells.map(({ key, ...rest }) => (
                  <StyleCell key={key} {...rest}>{key}</StyleCell>
                ))}
              </StyleGrid>
              <GalleryScroll>
                <GalleryArrow $off><MiniArrow dir="up" color="#b5b5b5" /></GalleryArrow>
                <GalleryArrow><MiniArrow dir="down" /></GalleryArrow>
                <GalleryArrow><MoreArrow /></GalleryArrow>
              </GalleryScroll>
            </Gallery>
          </GroupBody>
          <GroupLabel>样式</GroupLabel>
        </Group>
        <GroupSep />

        <Group $w={141}>
          <GroupBody $pl={8}>
            <BigButton $w={42}>
              <BigIcon><InsertIcon /></BigIcon>
              <span>插入</span>
              <BigCaret><Caret /></BigCaret>
            </BigButton>
            <BigButton $w={42}>
              <BigIcon><DeleteIcon /></BigIcon>
              <span>删除</span>
              <BigCaret><Caret /></BigCaret>
            </BigButton>
            <BigButton $w={42}>
              <BigIcon $mt={6} $h={35}><FormatIcon /></BigIcon>
              <span>格式</span>
              <BigCaret><Caret /></BigCaret>
            </BigButton>
          </GroupBody>
          <GroupLabel>单元格</GroupLabel>
        </Group>
        <GroupSep />

        <Group $w={238}>
          <GroupBody $pl={11}>
            <SmallColumn $w={88}>
              <SmallButton><SmallIcon><SigmaIcon /></SmallIcon><SmallText>自动求和</SmallText><CaretSlot $ml={10}><Caret /></CaretSlot></SmallButton>
              <SmallButton><SmallIcon><FillDownIcon /></SmallIcon><SmallText>填充</SmallText><CaretSlot><Caret /></CaretSlot></SmallButton>
              <SmallButton><SmallIcon><EraserIcon /></SmallIcon><SmallText>清除</SmallText><CaretSlot><Caret /></CaretSlot></SmallButton>
            </SmallColumn>
            <BigButton $w={66}>
              <BigIcon $mt={6} $h={35}><SortIcon /></BigIcon>
              <span>排序和筛选</span>
              <BigCaret><Caret /></BigCaret>
            </BigButton>
            <BigButton $w={66}>
              <BigIcon><FindIcon /></BigIcon>
              <span>查找和选择</span>
              <BigCaret><Caret /></BigCaret>
            </BigButton>
          </GroupBody>
          <GroupLabel>编辑</GroupLabel>
        </Group>
        <GroupSep />

        <Group $w={68}>
          <GroupBody>
            <BigButton $w={68}>
              <BigIcon><BaiduDiskIcon /></BigIcon>
              <span>保存到</span>
              <span>百度网盘</span>
            </BigButton>
          </GroupBody>
          <GroupLabel>保存</GroupLabel>
        </Group>
        <GroupSep />
        <Collapse width="10" height="6" viewBox="0 0 10 6">
          <path d="M1 5l4-4 4 4" fill="none" stroke="#555555" />
        </Collapse>
      </Ribbon>

      <FormulaStrip>
        <NameBox>C2<DropArrow /></NameBox>
        <Grip><GripDots /></Grip>
        <FormulaButtons>
          <CancelMark />
          <EnterMark />
          <Fx>fx</Fx>
        </FormulaButtons>
        <FormulaInput>
          =[@英语四级考试总分]*[@听力题型分数占比]
          <FormulaCaret width="11" height="8" viewBox="0 0 11 8">
            <path d="M1 1l4.500 5L10 1" fill="none" stroke="#666666" strokeWidth="2" />
          </FormulaCaret>
        </FormulaInput>
      </FormulaStrip>
      <ScrollPill />

      <SheetArea>
        <Grid>
          <Corner>
            <svg width="10" height="11" viewBox="0 0 10 11"><path d="M10 0v11H0z" fill="#b5b5b5" /></svg>
          </Corner>
          {columns.map((c, i) => (
            <ColumnHead key={`col${i}`} $on={c === "C"}>{c}</ColumnHead>
          ))}

          <RowHead>1</RowHead>
          <TableHeadCell>英语四级考试总分</TableHeadCell>
          <TableHeadCell>听力题型分数占比</TableHeadCell>
          <TableHeadCell>英语四级听力题型分数</TableHeadCell>
          {columns.slice(3).map((c, i) => (
            <Cell key={`r1${i}`} />
          ))}

          <RowHead $on>2</RowHead>
          <ValueCell $edge="#4472c4">710</ValueCell>
          <ValueCell $edge="#4472c4"><span>35<NarrowPercent>%</NarrowPercent></span></ValueCell>
          <ActiveCell>
            =[@英语四级考试总分]*[@听力题型分数占比]
            <FillHandle />
          </ActiveCell>
          {columns.slice(3).map((c, i) => (
            <Cell key={`r2${i}`} />
          ))}

          {blankRows.map((r, n) => (
            <React.Fragment key={n}>
              <RowHead>{r}</RowHead>
              {columns.map((c, i) => (
                <Cell key={`${n}-${i}`} />
              ))}
            </React.Fragment>
          ))}
        </Grid>
        <VScroll>
          <ScrollArrow><MiniArrow dir="up" /></ScrollArrow>
          <VThumb />
          <VTrack />
          <ScrollArrow $h={14}><MiniArrow dir="down" /></ScrollArrow>
        </VScroll>
        <CalloutRing />
        <CalloutArrow width="50" height="100" viewBox="0 0 50 100">
          <path d="M11 3L30 21L22 24L38 90L31 91L15 27L7 31Z" fill="#ff0000" />
        </CalloutArrow>
      </SheetArea>

      <SheetBar>
        <SheetNav>
          <MiniArrow dir="left" color="#c8c8c8" />
          <MiniArrow dir="right" color="#c8c8c8" />
        </SheetNav>
        <SheetTab>Sheet1</SheetTab>
        <AddSheet><PlusCircle /></AddSheet>
        <SplitDots><GripDots /></SplitDots>
        <HScroll>
          <ScrollArrow><MiniArrow dir="left" color="#666666" /></ScrollArrow>
          <HThumb />
          <HGap />
          <ScrollArrow><MiniArrow dir="right" color="#666666" /></ScrollArrow>
        </HScroll>
      </SheetBar>

      <StatusBar>
        <StatusText $ml={8}>就绪</StatusText>
        <StatusIcon $ml={19}><MacroIcon /></StatusIcon>
        <StatusIcon $ml={18}><AccessIcon /></StatusIcon>
        <StatusText $ml={2}>辅助功能: 调查</StatusText>
        <ViewGroup>
          <ViewButton $on><NormalView /></ViewButton>
          <ViewButton><PageView /></ViewButton>
          <ViewButton><BreakView /></ViewButton>
        </ViewGroup>
        <ZoomSign>−</ZoomSign>
        <ZoomTrack><ZoomThumb /></ZoomTrack>
        <ZoomSign>+</ZoomSign>
        <ZoomValue>100%</ZoomValue>
      </StatusBar>

      <Watermark>
        <PawIcon />
        <WatermarkText $x={4} $y={53} $size={80}>Bai</WatermarkText>
        <WatermarkText $x={142} $y={65} $size={50} $weight={400}>du</WatermarkText>
        <WatermarkText $x={226} $y={57} $size={58}>经验</WatermarkText>
        <WatermarkText $x={6} $y={126} $size={43} $weight={400}>jingyan.baidu.com</WatermarkText>
      </Watermark>
    </Page>
  );
}
